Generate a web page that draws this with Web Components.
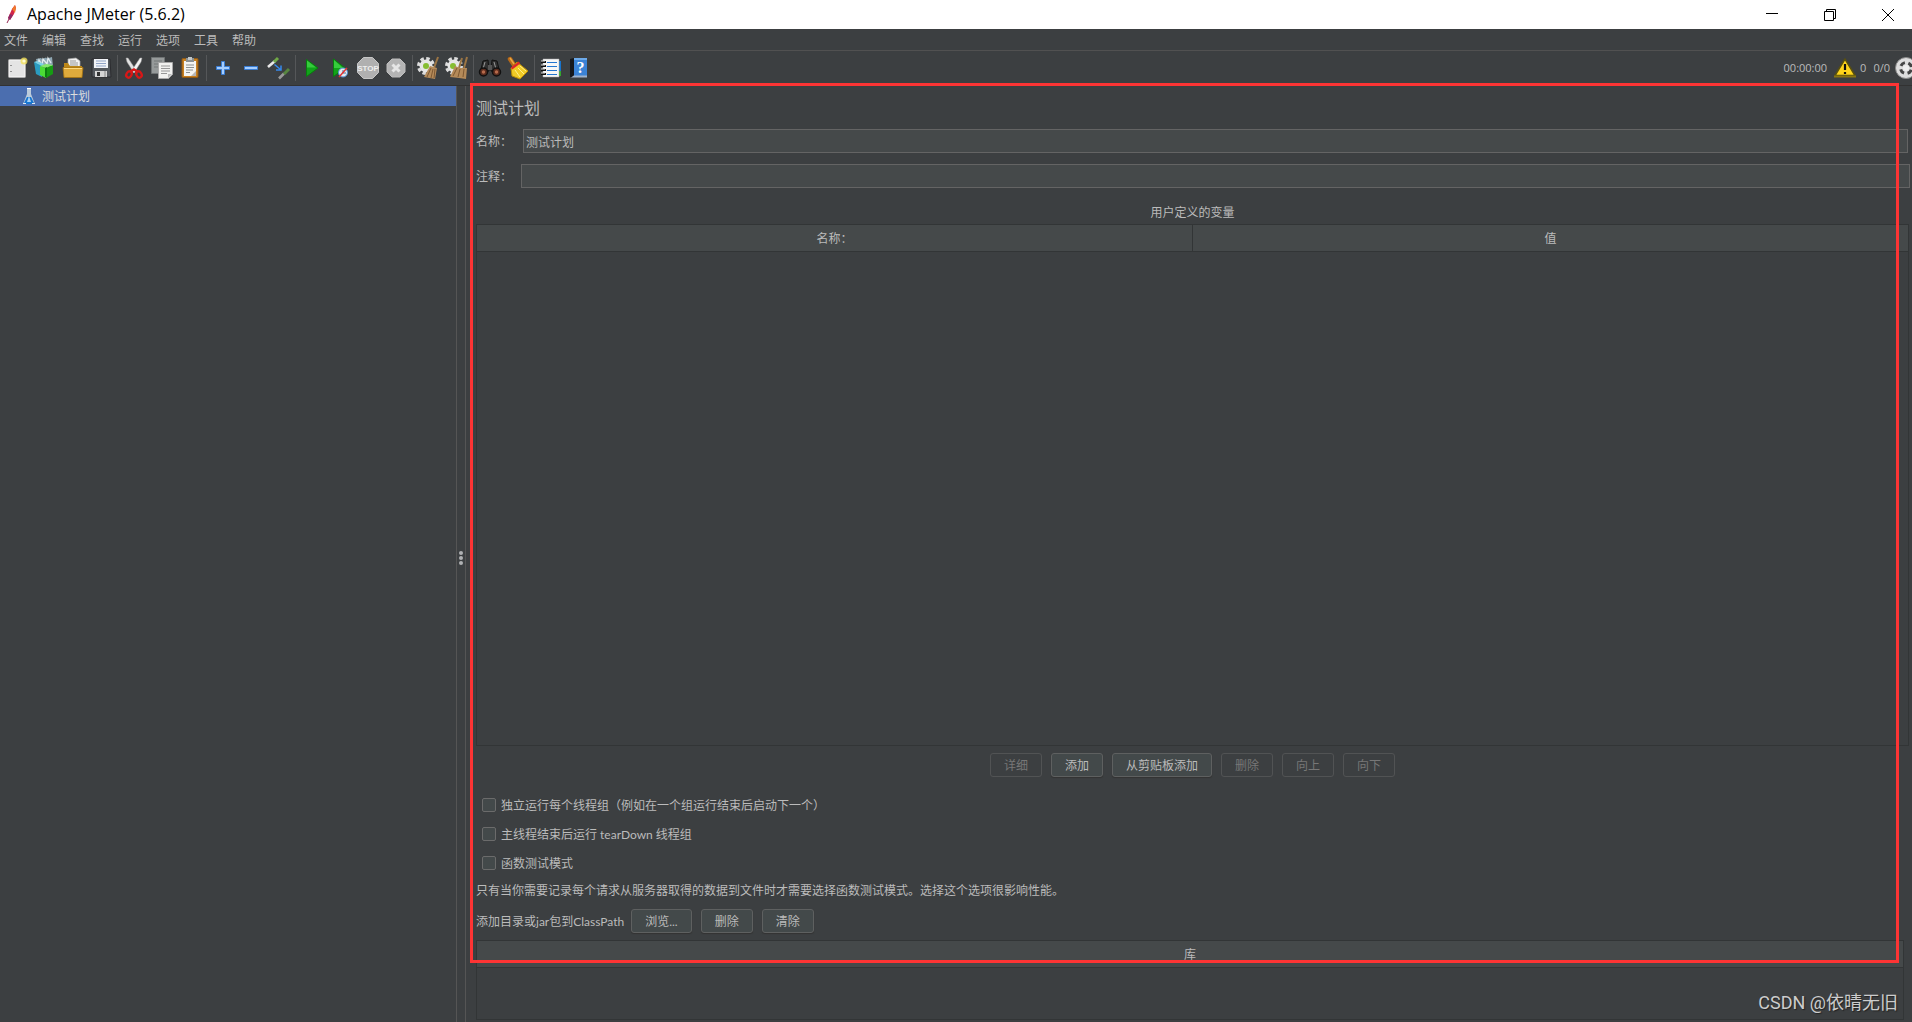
<!DOCTYPE html>
<html lang="zh-CN">
<head>
<meta charset="utf-8">
<title>Apache JMeter (5.6.2)</title>
<style>
html,body{margin:0;height:100%}
body{background:#3c3f41;color:#bbb;font:12px/16px Lato,"Noto Sans CJK SC",sans-serif;overflow:hidden}
</style>
</head>
<body>
<jm-app></jm-app>
<script>
const define=(name,html,init)=>customElements.define(name,class extends HTMLElement{
  constructor(){
    super();
    const t=document.createElement('template');
    t.innerHTML='<style>*{box-sizing:border-box}</style>'+html;
    this.attachShadow({mode:'open'}).append(t.content.cloneNode(true));
  }
  connectedCallback(){ if(init) init.call(this,this.shadowRoot); }
});

/* Toolbar drawings, each on a 24 by 24 grid */
const ICONS={
new:`<rect x="3.500" y="3.500" width="17" height="18" rx="1" fill="#eee" stroke="#aaa"/><rect x="5" y="5" width="14" height="15" fill="#e4e4e4"/><path d="M6 9v1M6 15v1" stroke="#777" stroke-width="1.500"/><circle cx="19" cy="5" r="3.500" fill="#f3e15b" opacity=".8"/><circle cx="19" cy="5" r="1.600" fill="#fffbd0"/>`,
templates:`<path d="M3 3l5-1 1 1 4-1.500 1 1L19 1l1 9H5z" fill="#8fa7b3"/><path d="M5 8l1-4 3 5 1-6 4 5 1-6 3 5" stroke="#e3ebee" stroke-width="1.300" fill="none"/><path d="M1 6l8 3v12l-6-3z" fill="#2a9cc0"/><path d="M1 6l3-1 7 3-2 2z" fill="#7cd0e3"/><path d="M7 10l6 2v10l-6-3z" fill="#4bdc35"/><path d="M13 12l7-3v9l-7 4z" fill="#169c13"/><path d="M7 10l6-2 7 1-7 3z" fill="#86e86b"/><path d="M12 12l2-1v11l-2-1z" fill="#0d7d10"/>`,
open:`<path d="M7 10V3l8-1 4 3v8z" fill="#f2f2f2" stroke="#aaa" stroke-width=".7"/><path d="M9 5h6M9 7h8M9 9h8" stroke="#999"/><path d="M3 7h4l2 3h12v11H3z" fill="#bc8718"/><path d="M2 11.500h20l-1 10H3z" fill="#dfab3c" stroke="#a87511" stroke-width=".8"/><path d="M3 12.500h18" stroke="#ffda7d"/>`,
save:`<path d="M3 3h18l1 18H3z" fill="#54585d" stroke="#2c2d30"/><path d="M5 3h14v9H5z" fill="#f2f4f8"/><path d="M7 5h10M7 7.500h10M7 10h10" stroke="#91a4c6"/><path d="M6 15h12v6H6z" fill="#d5d5d5"/><path d="M8 16h3v4H8z" fill="#333"/><path d="M16 15v6" stroke="#888"/>`,
cut:`<path d="M4 2l2 0 8 12-2 3L5 6z" fill="#e2e2e2" stroke="#999" stroke-width=".5"/><path d="M20 2l-2 0-8 12 2 3 7-11z" fill="#f4f4f4" stroke="#999" stroke-width=".5"/><g fill="none" stroke="#d81717" stroke-width="2.400"><ellipse cx="7" cy="18.500" rx="2.500" ry="3.200" transform="rotate(30 7 18.500)"/><ellipse cx="17" cy="18.500" rx="2.500" ry="3.200" transform="rotate(-30 17 18.500)"/><path d="M8.500 15.500l3.500-2 3.500 2"/></g>`,
copy:`<path d="M1.500 1.500h13v16h-13z" fill="#969a9a" stroke="#707475"/><path d="M4 5h8M4 8h7M4 11h5" stroke="#747879"/><path d="M8.500 6.500h14v12l-4 4h-10z" fill="#f1f1ef" stroke="#a8a8a8"/><path d="M11 10h9M11 12.500h9M11 15h9M11 17.500h6" stroke="#979797"/><path d="M22 18h-4v4z" fill="#bbb"/>`,
paste:`<rect x="4" y="2.500" width="16" height="19" rx="1" fill="#c88020" stroke="#8e5916"/><path d="M6 5h12v15H6z" fill="#f4f4f1"/><path d="M8 2h8v4H8z" fill="#8c9294"/><path d="M10 1h4v3h-4z" fill="#c2c6c7"/><path d="M8 9h8M8 11.500h8M8 14h7M8 16.500h4" stroke="#8c9191"/><path d="M13 20l5-5v5z" fill="#b6b6b6"/>`,
plus:`<path d="M10.500 5.500h3v5h5v3h-5v5h-3v-5h-5v-3h5z" fill="#a5ceff" stroke="#397dd4"/>`,
minus:`<path d="M5.500 10.500h13v3h-13z" fill="#a5ceff" stroke="#397dd4"/>`,
toggle:`<path d="M1 11L8 5" stroke="#e9e9e9" stroke-width="2.600"/><path d="M7 6l4-4" stroke="#70a846" stroke-width="3"/><path d="M12 22.500l5-5" stroke="#999" stroke-width="2.600"/><path d="M17 18l5-5" stroke="#578640" stroke-width="3"/><path d="M7.500 8.500l6 5M14 9.500v4.500H9" stroke="#3689ec" stroke-width="1.500" fill="none"/>`,
play:`<path d="M6.500 3.500L18 12 6.500 20.500z" fill="#12a31a" stroke="#07800c"/><path d="M7 4.500l9 7H7z" fill="#36cc3d"/>`,
playnp:`<path d="M5.500 3L17 12 5.500 20.500z" fill="#12a31a" stroke="#07800c"/><path d="M6 4l9 8H6z" fill="#36cc3d"/><circle cx="15" cy="16.500" r="4.500" fill="#e3eaf0" stroke="#4e8ed2"/><path d="M15 14v3h3" stroke="#4b7599" fill="none"/><path d="M11 21l8-9" stroke="#e13232" stroke-width="1.500"/>`,
stop:`<path d="M7.500 1.500h9l6 6v9l-6 6h-9l-6-6v-9z" fill="#b0b0b0" stroke="#c6c6c6"/><text x="12" y="15" text-anchor="middle" font-family="Liberation Sans, sans-serif" font-weight="700" font-size="8" fill="#eee">STOP</text>`,
shutdown:`<path d="M8 3h8l5 5v8l-5 5H8l-5-5V8z" fill="#b4b4b4" stroke="#bdbdbd"/><path d="M8.500 8.500l7 7M15.500 8.500l-7 7" stroke="#e6e6e6" stroke-width="3"/>`,
clear:`<circle cx="9" cy="10" r="7.500" fill="none" stroke="#dcdcdc" stroke-width="3" stroke-dasharray="3.500 2.390"/><circle cx="9" cy="10" r="6.500" fill="#e6e6e6"/><circle cx="9" cy="10" r="3" fill="#86bd32"/><path d="M21 1l-4 11" stroke="#9b7544" stroke-width="2"/><path d="M13 10l7 2-2 11-11-2z" fill="#b48a59"/><path d="M10 21l4-9M14 22l2-9M17 22l1-9" stroke="#7e5832"/>`,
clearall:`<circle cx="9" cy="10" r="7.500" fill="none" stroke="#dcdcdc" stroke-width="3" stroke-dasharray="3.500 2.390"/><circle cx="9" cy="10" r="6.500" fill="#e6e6e6"/><circle cx="8" cy="10" r="3" fill="#86bd32"/><path d="M17 2l-3 10M22 1l-3 11" stroke="#9b7544" stroke-width="2"/><path d="M10 10l5 2 7 0-1 11-7-1-9-1z" fill="#b48a59"/><path d="M8 20l4-8M13 21l2-8M18 21l1-8" stroke="#7e5832"/>`,
find:`<path d="M5 5l5-1 1 11-9 2zM19 5l-5-1-1 11 9 2z" fill="#303030" stroke="#111"/><path d="M7 6l-2 7M16 6l2 7" stroke="#999"/><path d="M10 9h4v5h-4z" fill="#555"/><circle cx="5.500" cy="16" r="4" fill="#5b2c1e" stroke="#111" stroke-width="1.500"/><circle cx="18.500" cy="16" r="4" fill="#5b2c1e" stroke="#111" stroke-width="1.500"/><circle cx="5.500" cy="16" r="1.700" fill="#b86b4c"/><circle cx="18.500" cy="16" r="1.700" fill="#b86b4c"/>`,
broom:`<path d="M4 3l4 6" stroke="#b76918" stroke-width="4.500" stroke-linecap="round"/><path d="M4 2l4 6" stroke="#eaa844" stroke-width="1.500"/><path d="M5 12l6-6 11 9-8 8-8-3z" fill="#f0ca25" stroke="#b78c09"/><path d="M5.500 12.500l8-6" stroke="#db2828" stroke-width="2.500"/><path d="M9 14l5 7M12 12l6 6M14 10l6 5" stroke="#ffef8b"/>`,
func:`<path d="M18 5h4v15h-4z" fill="#1874cc"/><path d="M19 15h3v5h-3z" fill="#34a62e"/><path d="M4 3h16v18H4z" fill="#f6f6f6" stroke="#aaa" stroke-width=".5"/><path d="M8 6.500h10M8 10.500h10M8 14.500h10M8 18.500h10" stroke="#2375cf" stroke-width="1.200"/><path d="M2 6h5M2 10h5M2 14h5M2 18h5" stroke="#111" stroke-width="2"/><path d="M2 5h4M2 9h4M2 13h4M2 17h4" stroke="#ddd"/>`,
help:`<path d="M3 3l4-1v17l-2 2H3z" fill="#15181c"/><path d="M7 2h13v18H7z" fill="#3b83d6"/><path d="M7 2h13v2H7z" fill="#6daae9"/><path d="M4 21.500l3-2h13v2z" fill="#9fb3cc"/><text x="13.500" y="17" text-anchor="middle" font-family="Liberation Serif, serif" font-weight="700" font-size="16" fill="#fff">?</text>`
};

define('jm-icon',`<style>:host{display:block;width:24px;height:24px}svg{display:block}</style><svg width="24" height="24" viewBox="0 0 24 24" aria-hidden="true"></svg>`,
function(r){r.querySelector('svg').innerHTML=ICONS[this.getAttribute('name')]});

define('jm-titlebar',`<style>
:host{display:flex;height:29px;flex:none;align-items:center;gap:10px;background:#fff;color:#000}
.logo{margin:0 0 2px 5px}
h1{flex:1;margin:0;padding-bottom:2px;font:16px/20px "Open Sans",sans-serif}
button{width:48px;height:28px;padding:0;border:0;background:none;display:grid;place-items:center}
</style>
<svg class="logo" width="12" height="20" viewBox="0 0 12 20"><path d="M2 19L8 7" stroke="#92264f"/><path d="M3 14L7 5l3-4 1 3-2 6-4 6z" fill="#d22549"/><path d="M7 5l3-4 1 3-1 5z" fill="#f0792c"/><path d="M3 14l2-4 3 1-3 5z" fill="#8b2a68"/></svg>
<h1>Apache JMeter (5.6.2)</h1>
<button aria-label="最小化"><svg width="12" height="12"><path d="M0 4.500h12" stroke="#000"/></svg></button>
<button aria-label="还原"><svg width="12" height="12" fill="none" stroke="#000"><path d="M.5 2.500h9v9h-9zM2.500 2.500v-2h9v9h-2"/></svg></button>
<button aria-label="关闭"><svg width="12" height="12"><path d="M0 0l12 12M12 0L0 12" stroke="#000"/></svg></button>`);

define('jm-menubar',`<style>
:host{display:flex;height:22px;flex:none;border-bottom:1px solid #515151;padding:2px 0 0 4px;gap:14px;align-items:center}
button{border:0;padding:0;background:none;color:inherit;font:inherit}
</style><button>文件</button><button>编辑</button><button>查找</button><button>运行</button><button>选项</button><button>工具</button><button>帮助</button>`);

define('jm-toolbar',`<style>
:host{display:flex;height:35px;flex:none;border-bottom:1px solid #323232;padding-left:3px;align-items:center;overflow:hidden}
button{width:28px;height:28px;flex:none;padding:0;border:0;background:none;display:grid;place-items:center}
hr{width:1px;height:26px;margin:0 2px;border:0;background:#555759;flex:none}
#tools{display:flex;align-items:center}
.status{margin-left:auto;display:flex;align-items:center;font:11px/16px "Open Sans",sans-serif}
.status svg{display:block}
.time{margin-right:7px}.err{margin:0 7px 0 4px}.thr{margin-right:5px}
</style><div id="tools"></div>
<div class="status"><span class="time">00:00:00</span>
<svg width="22" height="20" viewBox="0 0 22 20"><path d="M11 1L21 17.500H1z" fill="#ffd51b" stroke="#59500f" stroke-width="1.500" stroke-linejoin="round"/><path d="M0 18.500h22" stroke="#8a7711" stroke-width="2"/><path d="M11 6v6M11 14v2" stroke="#111" stroke-width="2.200"/></svg>
<span class="err">0</span><span class="thr">0/0</span>
<svg width="17" height="22" viewBox="0 0 17 22"><circle cx="11" cy="11" r="10.500" fill="#ddd" stroke="#888"/><circle cx="11" cy="11" r="5.500" fill="none" stroke="#444" stroke-width="3" stroke-dasharray="5 3.640" stroke-dashoffset="-1.800"/><circle cx="11" cy="11" r="3" fill="#eee"/></svg></div>`,
function(r){
  r.getElementById('tools').innerHTML='new templates open save | cut copy paste | plus minus toggle | play playnp stop shutdown | clear clearall | find broom | func help'
    .split(' ').map(n=>n==='|'?'<hr>':`<button aria-label="${n}"><jm-icon name="${n}"></jm-icon></button>`).join('');
});

define('jm-tree',`<style>
:host{display:block;width:457px;flex:none;border-right:1px solid #555}
a{display:flex;align-items:center;height:20px;padding-left:22px;gap:6px;background:#4b6eaf;color:#ddd;text-decoration:none}
span{padding-top:2px}
</style><a href="#plan"><svg width="14" height="18" viewBox="0 0 14 18"><path d="M5 1h4v6l4 10H1L5 7z" fill="#bccbda"/><path d="M5 10h4l3.500 7h-11z" fill="#1977d0"/><path d="M7 9l-2 6h4z" fill="#a9d2f6"/><path d="M5 1.500h4" stroke="#fff"/><path d="M1 16.500h3M10 16.500h3" stroke="#dde8f2"/></svg><span>测试计划</span></a>`);

define('jm-splitter',`<style>
:host{display:flex;flex-direction:column;justify-content:center;align-items:center;gap:1px;width:9px;padding-top:8px;flex:none;border-right:1px solid #555}
i{width:4px;height:4px;border-radius:2px;background:#afb1b3}
</style><i></i><i></i><i></i>`);

define('jm-button',`<style>
:host{display:block}
button{display:block;height:24px;padding:2px 13px 0;border:1px solid #5e6060;border-radius:3px;background:#43494a;color:#bbb;font:inherit;line-height:20px;box-shadow:0 1px 1px #333;white-space:nowrap}
button:disabled{background:none;color:#777;border-color:#515354;box-shadow:none}
</style><button><slot></slot></button>`,
function(r){r.querySelector('button').disabled=this.hasAttribute('disabled')});

define('jm-field',`<style>
:host{display:flex;height:24px;align-items:center}
label{width:var(--label,47px);flex:none;padding-top:2px}
input{flex:1;min-width:0;height:24px;padding:1px 2px 0;border:1px solid #646464;background:#45494a;color:#bbb;font:inherit;outline:0}
</style><label for="f"></label><input id="f" type="text">`,
function(r){r.querySelector('label').textContent=this.getAttribute('label');r.querySelector('input').value=this.getAttribute('value')||''});

define('jm-check',`<style>
:host{display:block}
label{display:flex;align-items:center;gap:5px;height:16px}
input{appearance:none;width:14px;height:14px;margin:0;border:1px solid #6b6b6b;border-radius:2px;background:#43494a}
span{padding-top:2px}
</style><label><input type="checkbox"><span><slot></slot></span></label>`);

define('jm-table',`<style>
:host{display:block;border:1px solid #323536}
table{width:100%;border-collapse:collapse;table-layout:fixed}
th{height:26px;padding:2px 0 0;font-weight:400;background:#45494a;border-bottom:1px solid #323536}
th+th{border-left:1px solid #323536}
</style><table><thead><tr></tr></thead><tbody></tbody></table>`,
function(r){r.querySelector('tr').innerHTML=this.getAttribute('columns').split(',').map(c=>`<th scope="col">${c}</th>`).join('')});

define('jm-plan',`<style>
:host{display:flex;flex-direction:column;flex:1;min-width:0;padding:12px 2px 2px 10px;position:relative}
h2{margin:0 0 11px;font-size:16px;line-height:20px;font-weight:400}
jm-field{margin-bottom:11px}
.name{margin-right:2px}.note{--label:45px}
.cap{margin:6px 1px 3px 0;text-align:center}
.vars{flex:1;margin-right:1px}
.row{display:flex;align-items:center}
.acts{justify-content:center;gap:9px;margin:7px 1px 20px 0}
.checks{display:flex;flex-direction:column;gap:13px;padding-left:6px}
p{margin:12px 0 10px}
.path{gap:9px}
.path span{margin-right:-2px;padding-top:2px}
.lib{height:80px;margin:7px 6px 0 0}
.frame{position:absolute;left:4px;right:13px;top:-3px;bottom:59px;border:3px solid #fd3434;pointer-events:none}
.mark{position:absolute;right:14px;bottom:6px;font:18px/26px Roboto,"Noto Sans CJK SC",sans-serif;color:#ccc;text-shadow:1px 1px 1px #222}
</style>
<h2>测试计划</h2>
<jm-field class="name" label="名称：" value="测试计划"></jm-field>
<jm-field class="note" label="注释："></jm-field>
<div class="cap">用户定义的变量</div>
<jm-table class="vars" columns="名称：,值"></jm-table>
<div class="row acts"><jm-button disabled>详细</jm-button><jm-button>添加</jm-button><jm-button>从剪贴板添加</jm-button><jm-button disabled>删除</jm-button><jm-button disabled>向上</jm-button><jm-button disabled>向下</jm-button></div>
<div class="checks"><jm-check>独立运行每个线程组（例如在一个组运行结束后启动下一个）</jm-check><jm-check>主线程结束后运行 tearDown 线程组</jm-check><jm-check>函数测试模式</jm-check></div>
<p>只有当你需要记录每个请求从服务器取得的数据到文件时才需要选择函数测试模式。选择这个选项很影响性能。</p>
<div class="row path"><span>添加目录或jar包到ClassPath</span><jm-button>浏览...</jm-button><jm-button>删除</jm-button><jm-button>清除</jm-button></div>
<jm-table class="lib" columns="库"></jm-table>
<div class="frame"></div><div class="mark">CSDN @依晴无旧</div>`);

define('jm-app',`<style>
:host{display:flex;flex-direction:column;height:100vh}
main{display:flex;flex:1;min-height:0}
</style><jm-titlebar></jm-titlebar><jm-menubar></jm-menubar><jm-toolbar></jm-toolbar><main><jm-tree></jm-tree><jm-splitter></jm-splitter><jm-plan></jm-plan></main>`);
</script>
</body>
</html>
